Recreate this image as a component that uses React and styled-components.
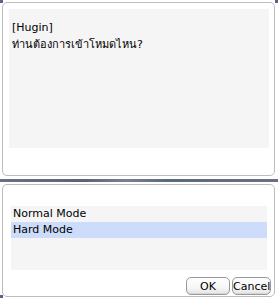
import React, { useState } from "react";
import styled, { createGlobalStyle } from "styled-components";

const Global = createGlobalStyle`
  html, body { margin: 0; padding: 0; background: #ffffff; }
  body { font-family: "DejaVu Sans", "Noto Sans", sans-serif; font-size: 11px; color: #000; }
`;

const Window = styled.div`
  width: 278px;
  height: 298px;
  display: flex;
  flex-direction: column;
  box-sizing: border-box;
  background: #ffffff;
  position: relative;
  overflow: hidden;
`;

const Corner = styled.div`
  position: absolute;
  width: 3px;
  height: 3px;
  background: #5a6482;
  ${(p) => p.$pos}
`;

const Panel = styled.div`
  box-sizing: border-box;
  margin: 0 3px 0 2px;
  border: 1px solid #bcbcbc;
  border-radius: 5px;
  background: #ffffff;
  display: flex;
  flex-direction: column;
`;

const TopPanel = styled(Panel)`
  margin-top: 2px;
  height: 174px;
  padding: 6px 5px 0 6px;
`;

const MessageArea = styled.div`
  background: #f5f5f5;
  height: 139px;
  padding: 10px 3px;
  box-sizing: border-box;
  line-height: 17px;
`;

const Line = styled.div`
  white-space: nowrap;
`;

const Splitter = styled.div`
  margin-top: 3px;
  height: 3px;
  background: linear-gradient(90deg, #6a7088 0%, #5c6276 30%, #7a8092 45%, #5a6a78 60%, #6a7088 100%);
`;

const BottomPanel = styled(Panel)`
  margin-top: 2px;
  height: 113px;
  padding: 21px 7px 0 8px;
`;

const List = styled.div`
  background: #f5f5f5;
  height: 64px;
  display: flex;
  flex-direction: column;
`;

const Item = styled.div`
  height: 16px;
  line-height: 16px;
  padding-left: 2px;
  background: ${(p) => (p.$selected ? "#cddcfa" : "transparent")};
  cursor: default;
  white-space: nowrap;
`;

const Buttons = styled.div`
  display: flex;
  justify-content: flex-end;
  gap: 2px;
  margin-top: 7px;
  margin-right: -4px;
`;

const Button = styled.button`
  box-sizing: border-box;
  height: 18px;
  width: ${(p) => p.$w}px;
  padding: 0;
  font-family: "DejaVu Sans", "Noto Sans", sans-serif;
  font-size: 11px;
  color: #000;
  border: 1px solid #9a9a9a;
  border-radius: 5px;
  background: linear-gradient(180deg, #ffffff 0%, #f6f6f6 60%, #e4e4e4 100%);
  box-shadow: inset 0 -1px 0 #d6d6d6;
`;

export default function App() {
  const [sel, setSel] = useState(1);
  const items = ["Normal Mode", "Hard Mode"];
  return (
    <>
      <Global />
      <Window>
        <Corner $pos="left:0;top:0;" />
        <Corner $pos="right:0;top:0;" />
        <Corner $pos="left:0;bottom:0;" />
        <TopPanel>
          <MessageArea>
            <Line>[Hugin]</Line>
            <Line>ท่านต้องการเข้าโหมดไหน?</Line>
          </MessageArea>
        </TopPanel>
        <Splitter />
        <BottomPanel>
          <List>
            {items.map((t, i) => (
              <Item key={t} $selected={sel === i} onClick={() => setSel(i)}>
                {t}
              </Item>
            ))}
          </List>
          <Buttons>
            <Button $w={44}>OK</Button>
            <Button $w={39}>Cancel</Button>
          </Buttons>
        </BottomPanel>
      </Window>
    </>
  );
}
